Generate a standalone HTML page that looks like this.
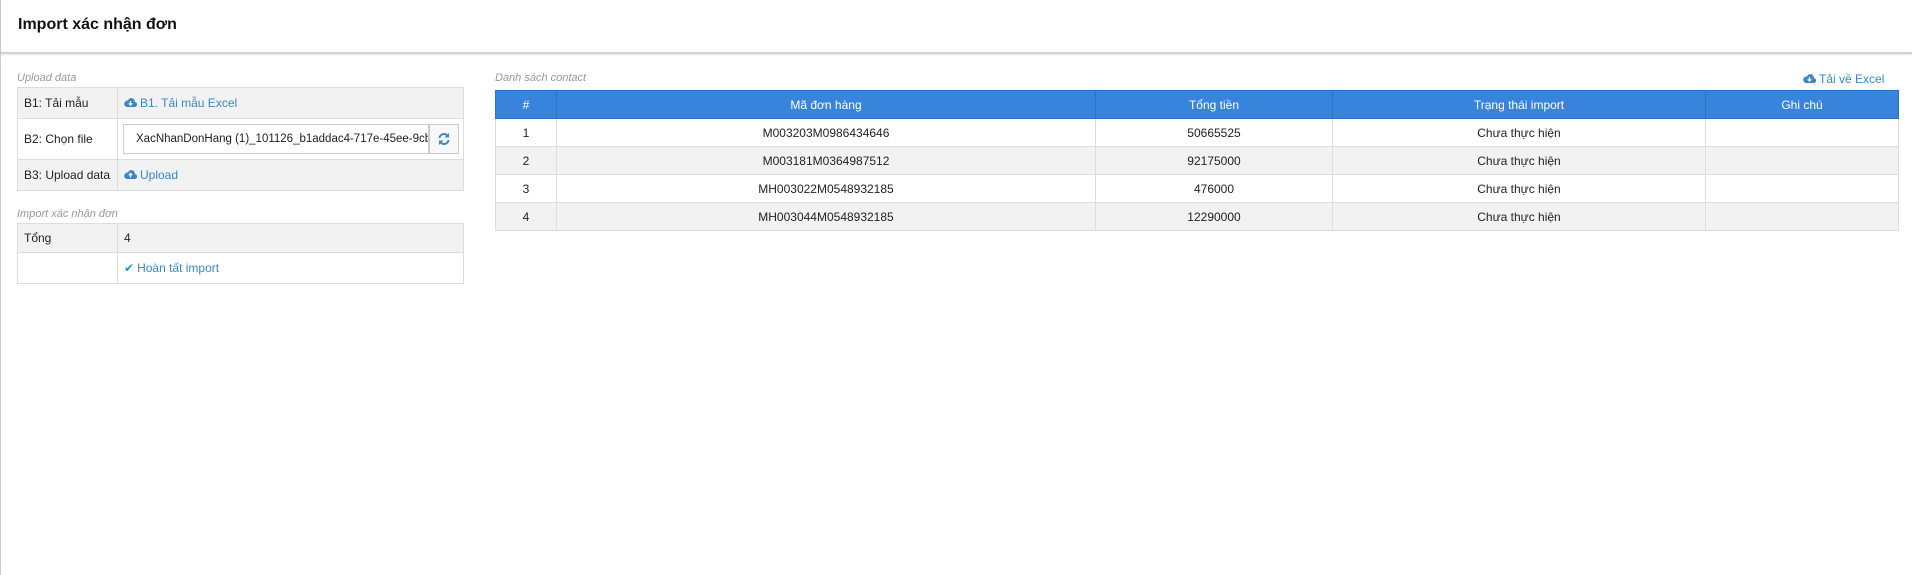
<!DOCTYPE html>
<html><head><meta charset="utf-8"><style>
*{box-sizing:border-box;margin:0;padding:0}
body{width:1912px;height:575px;background:#fff;font-family:"Liberation Sans",Arial,sans-serif;font-size:12px;color:#222;position:relative;overflow:hidden;border-left:1px solid #ccc}
.hdr{position:absolute;left:0;top:0;width:1912px;height:54px;border-bottom:2px solid #d0d0d0;box-shadow:0 1px 2px rgba(0,0,0,.1)}
.hdr h1{position:absolute;left:17px;top:16px;font-size:16px;font-weight:bold;color:#111}
.lbl{position:absolute;font-style:italic;color:#999;font-size:11px}
table{border-collapse:collapse;position:absolute}
td,th{border:1px solid #ddd}
.lt td{padding:0 0 0 6px}
.lt td:first-child{width:100px}
.g{background:#f2f2f2}
a{color:#3a87c8;text-decoration:none}
.ic{display:inline-block;vertical-align:-1px;margin-right:3px}
.rt th{background:#3884dd;color:#fff;font-weight:normal;height:28px;border-color:#2c72c4}
.rt td{text-align:center;height:28px}
.rt tr:nth-child(odd) td{background:#f2f2f2}
</style></head><body>
<div class="hdr"><h1>Import xác nhận đơn</h1></div>
<div class="lbl" style="left:16px;top:72px">Upload data</div>
<table class="lt" style="left:16px;top:87px;width:447px">
<tr class="g" style="height:31px"><td>B1: Tải mẫu</td><td><a><svg class="ic" width="13" height="11" viewBox="0 0 13 11"><path d="M3 10h7.5a2.5 2.5 0 0 0 .3-5A3.5 3.5 0 0 0 4 3.5 3 3 0 0 0 3 10z" fill="#3a87c8"/><path d="M6.5 4v4M4.8 6.3l1.7 1.8 1.7-1.8" stroke="#fff" stroke-width="1.3" fill="none"/></svg>B1. Tải mẫu Excel</a></td></tr>
<tr style="height:41px"><td>B2: Chọn file</td><td style="padding-left:5px"><div style="display:flex"><div style="width:306px;height:30px;border:1px solid #ccc;padding:8px 0 0 12px;overflow:hidden;white-space:nowrap;font-size:11.5px">XacNhanDonHang (1)_101126_b1addac4-717e-45ee-9cb</div><div style="width:30px;height:30px;border:1px solid #ccc;background:#f8f8f8;display:flex;align-items:center;justify-content:center"><svg width="14" height="14" viewBox="0 0 14 14"><path d="M2.5 6A4.5 4.5 0 0 1 11 4.5M11.5 8A4.5 4.5 0 0 1 3 9.5" stroke="#3a87c8" stroke-width="2" fill="none"/><path d="M12 1v4.5H7.5zM2 13V8.5h4.5z" fill="#3a87c8"/></svg></div></div></td></tr>
<tr class="g" style="height:31px"><td>B3: Upload data</td><td><a><svg class="ic" width="13" height="11" viewBox="0 0 13 11"><path d="M3 10h7.5a2.5 2.5 0 0 0 .3-5A3.5 3.5 0 0 0 4 3.5 3 3 0 0 0 3 10z" fill="#3a87c8"/><path d="M6.5 8.5v-4M4.8 6.2l1.7-1.8 1.7 1.8" stroke="#fff" stroke-width="1.3" fill="none"/></svg>Upload</a></td></tr>
</table>
<div class="lbl" style="left:16px;top:208px">Import xác nhận đơn</div>
<table class="lt" style="left:16px;top:223px;width:447px">
<tr class="g" style="height:29px"><td>Tổng</td><td>4</td></tr>
<tr style="height:31px"><td></td><td><a><span style="margin-right:3px">✔</span>Hoàn tất import</a></td></tr>
</table>
<div class="lbl" style="left:494px;top:72px">Danh sách contact</div>
<a style="position:absolute;left:1802px;top:72px;font-size:12px"><svg class="ic" width="13" height="11" viewBox="0 0 13 11"><path d="M3 10h7.5a2.5 2.5 0 0 0 .3-5A3.5 3.5 0 0 0 4 3.5 3 3 0 0 0 3 10z" fill="#3a87c8"/><path d="M6.5 4v4M4.8 6.3l1.7 1.8 1.7-1.8" stroke="#fff" stroke-width="1.3" fill="none"/></svg>Tải về Excel</a>
<table class="rt" style="left:494px;top:90px;width:1404px">
<tr><th style="width:61px">#</th><th style="width:539px">Mã đơn hàng</th><th style="width:237px">Tổng tiền</th><th style="width:373px">Trạng thái import</th><th>Ghi chú</th></tr>
<tr><td>1</td><td>M003203M0986434646</td><td>50665525</td><td>Chưa thực hiện</td><td></td></tr>
<tr><td>2</td><td>M003181M0364987512</td><td>92175000</td><td>Chưa thực hiện</td><td></td></tr>
<tr><td>3</td><td>MH003022M0548932185</td><td>476000</td><td>Chưa thực hiện</td><td></td></tr>
<tr><td>4</td><td>MH003044M0548932185</td><td>12290000</td><td>Chưa thực hiện</td><td></td></tr>
</table>
</body></html>
